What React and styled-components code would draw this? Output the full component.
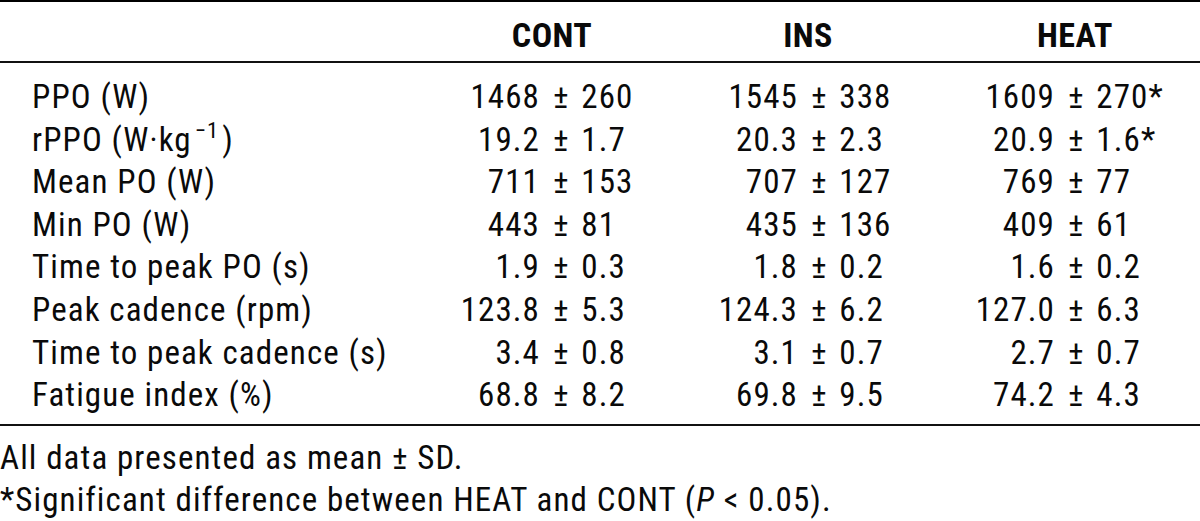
import React from 'react';
import styled, { createGlobalStyle } from 'styled-components';

const GlobalStyle = createGlobalStyle`
  body {
    margin: 0;
    background: #fff;
    color: #0a0a0a;
    font-family: "Roboto Condensed", "Liberation Sans", sans-serif;
  }
`;

const Table = styled.div`
  width: 1200px;
  border-top: 2px solid #000;
  font-size: 33px;
  letter-spacing: 1.1px;
`;

// Shared column grid: label, then lead | tail pairs aligned on the ± sign
const columns = '398px 123px 147px 111px 149px 108px 1fr';

const HeadRow = styled.div`
  display: grid;
  grid-template-columns: ${columns};
  padding: 7px 0 0 32px;
  line-height: 52px;
  font-size: 34px;
  font-weight: 700;
  letter-spacing: 0.4px;
  border-bottom: 2px solid #111;
`;

const HeadCell = styled.div`
  grid-column: span 2;
  text-align: center;
  padding-right: ${(props) => props.shift}px;
`;

const Body = styled.div`
  padding: 13px 0 7px;
  border-bottom: 2px solid #111;
`;

const Row = styled.div`
  display: grid;
  grid-template-columns: ${columns};
  padding-left: 32px;
  line-height: 42.6px;
  white-space: nowrap;
`;

const Label = styled.div``;

const Lead = styled.div`
  text-align: right;
  padding-right: 13px;
`;

const Tail = styled.div`
  word-spacing: 3px;
`;

const Sup = styled.span`
  font-size: 0.68em;
  line-height: 0;
  vertical-align: 0.55em;
  margin-left: 3px;
  margin-right: 3px;
`;

const Notes = styled.div`
  padding-top: 11px;
  font-size: 33px;
  letter-spacing: 1.1px;
  line-height: 42px;
`;

const Note = styled.div`
  white-space: nowrap;
`;

const rows = [
  ['PPO (W)', ['1468', '260'], ['1545', '338'], ['1609', '270*']],
  ['rPPO', ['19.2', '1.7'], ['20.3', '2.3'], ['20.9', '1.6*']],
  ['Mean PO (W)', ['711', '153'], ['707', '127'], ['769', '77']],
  ['Min PO (W)', ['443', '81'], ['435', '136'], ['409', '61']],
  ['Time to peak PO (s)', ['1.9', '0.3'], ['1.8', '0.2'], ['1.6', '0.2']],
  ['Peak cadence (rpm)', ['123.8', '5.3'], ['124.3', '6.2'], ['127.0', '6.3']],
  ['Time to peak cadence (s)', ['3.4', '0.8'], ['3.1', '0.7'], ['2.7', '0.7']],
  ['Fatigue index (%)', ['68.8', '8.2'], ['69.8', '9.5'], ['74.2', '4.3']],
];

function RowLabel({ text }) {
  if (text === 'rPPO') {
    return (
      <Label>
        rPPO (W·kg<Sup>−1</Sup>)
      </Label>
    );
  }
  return <Label>{text}</Label>;
}

export default function App() {
  return (
    <>
      <GlobalStyle />
      <Table>
        <HeadRow>
          <div />
          <HeadCell shift={26}>CONT</HeadCell>
          <HeadCell shift={44}>INS</HeadCell>
          <HeadCell shift={10}>HEAT</HeadCell>
        </HeadRow>
        <Body>
          {rows.map(([label, ...values]) => (
            <Row key={label}>
              <RowLabel text={label} />
              {values.map(([mean, sd], i) => (
                <React.Fragment key={i}>
                  <Lead>{mean}</Lead>
                  <Tail>± {sd}</Tail>
                </React.Fragment>
              ))}
            </Row>
          ))}
        </Body>
      </Table>
      <Notes>
        <Note>All data presented as mean ± SD.</Note>
        <Note>
          *Significant difference between HEAT and CONT (<i>P</i> &lt; 0.05).
        </Note>
      </Notes>
    </>
  );
}
